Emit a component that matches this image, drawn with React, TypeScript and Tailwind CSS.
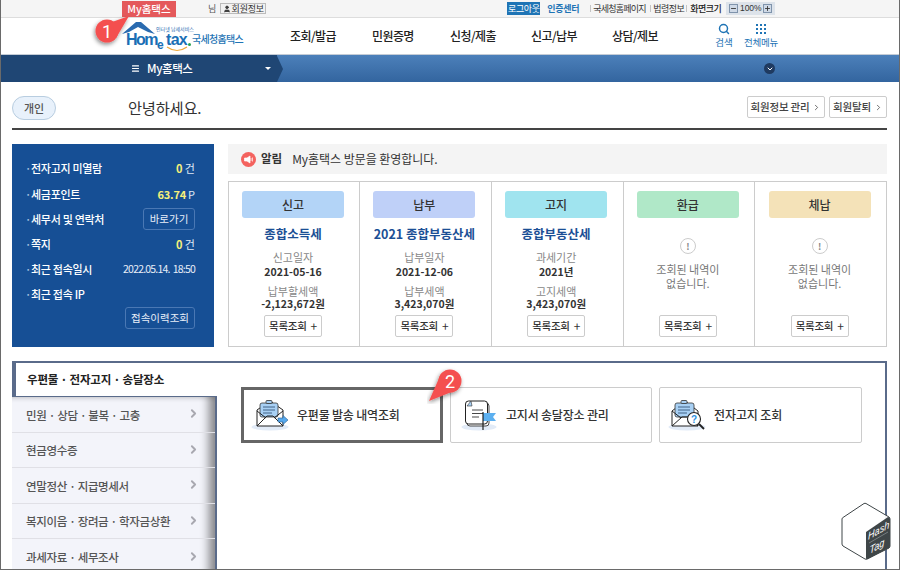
import { ChevronDown, ChevronRight, Menu, Plus, Minus, Search, User } from 'lucide-react';

const FONT = "font-['Noto_Sans_CJK_KR','Noto_Sans',sans-serif]";

const navItems = [
  { label: '조회/발급', w: 'w-[82px]' },
  { label: '민원증명', w: 'w-[78px]' },
  { label: '신청/제출', w: 'w-[81px]' },
  { label: '신고/납부', w: 'w-[81px]' },
  { label: '상담/제보', w: 'w-[81px]' },
];

const sideMenu = [
  '민원 · 상담 · 불복 · 고충',
  '현금영수증',
  '연말정산 · 지급명세서',
  '복지이음 · 장려금 · 학자금상환',
  '과세자료 · 세무조사',
];

const cards = [
  { tag: '신고', chip: 'bg-[#b3d4f7]', title: '종합소득세', l1: '신고일자', v1: '2021-05-16', l2: '납부할세액', v2: '-2,123,672원' },
  { tag: '납부', chip: 'bg-[#bfd0f8]', title: '2021 종합부동산세', l1: '납부일자', v1: '2021-12-06', l2: '납부세액', v2: '3,423,070원' },
  { tag: '고지', chip: 'bg-[#a0e4ef]', title: '종합부동산세', l1: '과세기간', v1: '2021년', l2: '고지세액', v2: '3,423,070원' },
  { tag: '환급', chip: 'bg-[#b0e8c8]' },
  { tag: '체납', chip: 'bg-[#f4e2b8]' },
];

function Badge({ n, className, tail }: { n: number; className: string; tail: string }) {
  return (
    <svg className={`absolute z-20 ${className}`} width="46" height="46" viewBox="0 0 46 46">
      <defs>
        <filter id={`bs${n}`} x="-30%" y="-30%" width="160%" height="160%">
          <feDropShadow dx="-1" dy="2" stdDeviation="2" floodColor="#000" floodOpacity="0.45" />
        </filter>
      </defs>
      <g filter={`url(#bs${n})`}>
        <circle cx="23" cy="23" r="11.5" fill="#f4504f" />
        <polygon points={tail} fill="#f4504f" />
      </g>
      <text x="23" y="29.5" textAnchor="middle" fontSize="18" fill="#fff" fontFamily="Roboto, sans-serif">{n}</text>
    </svg>
  );
}

function Logo() {
  return (
    <div className="relative w-[122px] h-[36px] shrink-0">
      <svg className="absolute left-0 top-[3px]" width="34" height="14" viewBox="0 0 34 14">
        <polygon points="0,13 14,1 19,1 33,13 26,11 16,6 7,11" fill="#2a6bb0" />
      </svg>
      <span className="absolute left-[34px] top-[8px] text-[5px] leading-[6px] text-[#2a6bb0] whitespace-nowrap">인터넷 납세서비스</span>
      <span className="absolute left-[4px] top-[12px] text-[16px] leading-[20px] font-bold tracking-[-1.5px] text-[#1b6fb5] font-['Liberation_Sans',sans-serif]">Hom</span>
      <span className="absolute left-[35px] top-[18px] text-[12px] leading-[18px] font-bold text-[#1b6fb5] font-['Liberation_Sans',sans-serif]">e</span>
      <span className="absolute left-[44px] top-[12px] text-[16px] leading-[20px] font-bold tracking-[-0.7px] text-[#1b6fb5] font-['Liberation_Sans',sans-serif]">tax</span>
      <span className="absolute left-[66px] top-[25px] w-[3px] h-[3px] rounded-full bg-[#2aa050]" />
      <svg className="absolute left-[44px] top-[28px]" width="22" height="6" viewBox="0 0 22 6">
        <path d="M1 1 Q11 8 21 1" fill="none" stroke="#eea83a" strokeWidth="1.2" />
      </svg>
      <span className="absolute left-[70px] top-[14px] text-[10px] leading-[14px] font-medium tracking-[-0.7px] text-[#1f74b5] whitespace-nowrap">국세청홈택스</span>
    </div>
  );
}

function SummaryRow({ label, children }: { label: string; children?: React.ReactNode }) {
  return (
    <div className="flex items-center justify-between h-[25.2px]">
      <span className="flex items-center text-[11px] font-medium tracking-[-0.3px] text-white whitespace-nowrap">
        <span className="w-[6px] text-[#a8c0e0]">·</span>
        {label}
      </span>
      {children}
    </div>
  );
}

function OutlineBtn({ children, className }: { children: React.ReactNode; className: string }) {
  return (
    <button className={`flex items-center justify-center rounded-[3px] border border-[#4a78b4] text-[10.5px] text-[#e8eef8] ${className}`}>
      {children}
    </button>
  );
}

function MailSendIcon() {
  return (
    <svg width="38" height="32" viewBox="0 0 38 32" className="shrink-0">
      <ellipse cx="19" cy="28" rx="18.5" ry="3.5" fill="#e2ebf7" />
      <path d="M6 11 L19 2 L32 11 V27 H6 Z" fill="#fff" stroke="#222" strokeWidth="1" />
      <rect x="9" y="4" width="18" height="14" rx="2" fill="#a8d0f4" stroke="#333" strokeWidth="0.8" />
      <rect x="15" y="1.5" width="6" height="3" rx="1" fill="#a8d0f4" stroke="#333" strokeWidth="0.8" />
      <path d="M12 8 H24 M12 11 H24 M12 14 H21" stroke="#35587c" strokeWidth="0.9" />
      <path d="M6 27 L16 17 H22 L32 27 M6 12 L15 19 M32 12 L23 19" fill="none" stroke="#222" strokeWidth="1" />
      <path d="M27 19 H32 V16.5 L37 21 L32 25.5 V23 H27 Z" fill="#56a8ec" stroke="#2d5f8f" strokeWidth="0.6" />
    </svg>
  );
}

function NoticeIcon() {
  return (
    <svg width="36" height="32" viewBox="0 0 36 32" className="shrink-0">
      <ellipse cx="18" cy="28" rx="17.5" ry="3.5" fill="#e2ebf7" />
      <rect x="6" y="4" width="22" height="23" rx="3" fill="#fff" stroke="#333" strokeWidth="0.9" />
      <rect x="4.5" y="2" width="22" height="23" rx="3" fill="#fff" stroke="#222" strokeWidth="1" />
      <polygon points="6,7 10,2 11,7" fill="#a8d0f4" stroke="#333" strokeWidth="0.6" />
      <path d="M11 11 H22 M11 14.5 H22 M11 18 H18" stroke="#333" strokeWidth="0.9" />
      <polygon points="22,14 35,14 32,18 35,22 22,22" fill="#5cb0f0" />
      <path d="M22 13 V31" stroke="#111" strokeWidth="1.1" />
    </svg>
  );
}

function MailSearchIcon() {
  return (
    <svg width="38" height="32" viewBox="0 0 38 32" className="shrink-0">
      <ellipse cx="19" cy="28" rx="18.5" ry="3.5" fill="#e2ebf7" />
      <path d="M4 12 L17 2 L30 12 V27 H4 Z" fill="#fff" stroke="#222" strokeWidth="1" />
      <rect x="7" y="4" width="19" height="14" rx="2" fill="#a8d0f4" stroke="#333" strokeWidth="0.8" />
      <rect x="13" y="1.5" width="6" height="3" rx="1" fill="#a8d0f4" stroke="#333" strokeWidth="0.8" />
      <path d="M10 8 H22 M10 11 H22 M10 14 H19" stroke="#35587c" strokeWidth="0.9" />
      <path d="M4 27 L14 18 H20 L30 27 M4 12 L13 19" fill="none" stroke="#222" strokeWidth="1" />
      <circle cx="26" cy="20" r="6.5" fill="#fff" stroke="#222" strokeWidth="1.1" />
      <text x="26" y="23.5" textAnchor="middle" fontSize="10" fontWeight="700" fill="#2d8fe0" fontFamily="Liberation Sans, sans-serif">?</text>
      <path d="M31 25 L36 30" stroke="#222" strokeWidth="1.8" />
    </svg>
  );
}

function HashTagMark() {
  return (
    <svg className="absolute left-[840px] top-[502px] z-20" width="52" height="59" viewBox="0 0 52 59">
      <path d="M23 1.5 Q24 1 25 1.5 L48 15 Q49 16 49 17 V44 Q49 45 48 46 L26 57 Q25 57.5 24 57 L2 44 Q1 43 1 42 V17 Q1 16 2 15.5 Z" fill="#fff" fillOpacity="0.92" stroke="#3f4648" strokeWidth="1" />
      <path d="M25 30 L47 15 Q49 15 49 17 V44 Q49 45 48 46 L27 57 Q25 58 25 56 Z" fill="#3f4648" />
      <g fill="#fff" fontFamily="Liberation Sans, sans-serif" fontStyle="italic" fontSize="10.5">
        <text transform="matrix(0.87 -0.5 0 1 27 38)">Hash</text>
        <text transform="matrix(0.87 -0.5 0 1 28.5 52)">Tag</text>
      </g>
      <path d="M28 41 L47 30" stroke="#aeb4b6" strokeWidth="0.5" />
    </svg>
  );
}

function ListBtn() {
  return (
    <button className="flex items-center justify-center gap-[4px] w-[58px] h-[22px] bg-white border border-[#ccc] rounded-[2px] text-[10.5px] font-medium tracking-[-0.3px] text-[#333] whitespace-nowrap">
      목록조회 <span className="text-[12px] font-normal leading-none">+</span>
    </button>
  );
}

function Sep() {
  return <span className="w-[1px] h-[7px] bg-[#c4c4c4] shrink-0" />;
}

export default function App() {
  return (
    <div className={`relative w-[900px] h-[570px] overflow-hidden bg-white border-x border-b border-[#6a6a6a] ${FONT}`}>
      {/* top utility bar */}
      <div className="flex items-center h-[18px] bg-[#f5f5f5] border-b border-[#dddddd] pl-[121px] text-[9px] text-[#444] whitespace-nowrap">
        <div className="flex items-center justify-center w-[54px] h-[16px] mt-[1px] self-start bg-[#e4595b] text-[10.5px] font-medium text-white">My홈택스</div>
        <span className="ml-[32px] text-[#555]">님</span>
        <span className="flex items-center gap-[1px] ml-[4px] w-[46px] h-[11px] justify-center border border-[#bbb] bg-[#f2f2f2] text-[#333] tracking-[-0.2px]">
          <User size={8} fill="#444" strokeWidth={2} />회원정보
        </span>
        <span className="flex items-center justify-center ml-[241px] w-[33px] h-[13px] bg-[#1f74b5] text-white tracking-[-0.4px]">로그아웃</span>
        <span className="ml-[7px] w-[43px] font-bold tracking-[-0.3px] text-[#1f74b5]">인증센터</span>
        <Sep />
        <span className="ml-[2px] w-[57px] tracking-[-0.8px] text-[#333]">국세청홈페이지</span>
        <Sep />
        <span className="ml-[2px] w-[33px] tracking-[-0.5px] text-[#333]">법령정보</span>
        <Sep />
        <span className="ml-[3px] w-[36px] font-medium tracking-[-0.5px] text-[#222]">화면크기</span>
        <span className="flex items-center justify-between w-[49px] h-[13px] px-[3px] bg-[#dde3ea] text-[8.5px] font-['Liberation_Sans',sans-serif] text-[#333]">
          <span className="flex items-center justify-center w-[9px] h-[9px] bg-[#cfd9e6] border border-[#7f93ab]"><Minus size={7} strokeWidth={3} /></span>
          100%
          <span className="flex items-center justify-center w-[9px] h-[9px] bg-[#cfd9e6] border border-[#7f93ab]"><Plus size={7} strokeWidth={3} /></span>
        </span>
      </div>

      {/* header */}
      <div className="flex items-center h-[37px] bg-white border-b border-[#c4ccd6] pl-[121px]">
        <Logo />
        <nav className="flex ml-[46px]">
          {navItems.map((item) => (
            <a key={item.label} className={`${item.w} text-[12px] font-medium tracking-[-0.6px] text-[#222] whitespace-nowrap`}>{item.label}</a>
          ))}
        </nav>
        <div className="flex flex-col items-center ml-[22px] w-[18px] text-[#1f74b5]">
          <Search size={12} strokeWidth={3} />
          <span className="text-[9.5px] leading-[14px] whitespace-nowrap">검색</span>
        </div>
        <div className="flex flex-col items-center ml-[11px] w-[34px] text-[#1f74b5]">
          <div className="grid grid-cols-3 gap-[2px] w-[10px] h-[12px] content-center">
            {Array.from({ length: 9 }).map((_, i) => (
              <span key={i} className="w-[2px] h-[2px] bg-[#1f74b5]" />
            ))}
          </div>
          <span className="text-[9.5px] leading-[14px] tracking-[-0.3px] whitespace-nowrap">전체메뉴</span>
        </div>
      </div>

      {/* blue menu bar */}
      <div className="relative flex items-center h-[27px] bg-gradient-to-b from-[#4c80ba] to-[#33659f]">
        <div className="flex items-center h-full w-[276px] bg-[#1f4674] pl-[130px] text-white">
          <Menu size={9} strokeWidth={3} />
          <span className="ml-[7px] text-[11.5px] font-medium tracking-[-0.4px]">My홈택스</span>
          <span className="ml-[72px] w-0 h-0 border-x-[3px] border-x-transparent border-t-[3px] border-t-white" />
        </div>
        <div className="w-0 h-0 border-y-[13.5px] border-y-transparent border-l-[6px] border-l-[#1f4674]" />
        <span className="ml-[481px] flex items-center justify-center w-[11px] h-[11px] rounded-full bg-[#1f3a60] text-white">
          <ChevronDown size={8} strokeWidth={3} />
        </span>
      </div>

      <div className="pl-[11px] pr-[12px]">
        {/* greeting */}
        <div className="flex items-start h-[48px] border-b-2 border-[#444] pt-[14px]">
          <span className="flex items-center justify-center w-[44px] h-[24px] rounded-full bg-[#e8f1fb] border border-[#b8cde0] text-[11px] font-medium text-[#555]">개인</span>
          <span className="ml-[72px] text-[15.3px] leading-[22px] tracking-[-0.2px] text-[#333]">안녕하세요.</span>
          <button className="ml-auto flex items-center justify-center gap-[3px] w-[78px] h-[22px] border border-[#ccc] rounded-[2px] text-[10.5px] font-medium tracking-[-0.2px] text-[#444] whitespace-nowrap">
            회원정보 관리 <ChevronRight size={9} />
          </button>
          <button className="ml-[4px] flex items-center justify-center gap-[3px] w-[58px] h-[22px] border border-[#ccc] rounded-[2px] text-[10.5px] font-medium tracking-[-0.2px] text-[#444] whitespace-nowrap">
            회원탈퇴 <ChevronRight size={9} />
          </button>
        </div>

        {/* summary + status cards */}
        <div className="flex mt-[14px] gap-[14px] h-[203px]">
          <div className="w-[202px] shrink-0 bg-[#164f95] pt-[12px] pl-[13px] pr-[19px] flex flex-col">
            <SummaryRow label="전자고지 미열람">
              <span className="text-[11px] text-[#dfe8f5]"><b className="font-bold text-[#f5f07a]">0</b> 건</span>
            </SummaryRow>
            <SummaryRow label="세금포인트">
              <span className="text-[11px] text-[#dfe8f5]"><b className="font-bold tracking-[-0.2px] text-[#f5f07a]">63.74</b><span className="ml-[2px]">P</span></span>
            </SummaryRow>
            <SummaryRow label="세무서 및 연락처">
              <OutlineBtn className="w-[52px] h-[22px]">바로가기</OutlineBtn>
            </SummaryRow>
            <SummaryRow label="쪽지">
              <span className="text-[11px] text-[#dfe8f5]"><b className="font-bold text-[#f5f07a]">0</b> 건</span>
            </SummaryRow>
            <SummaryRow label="최근 접속일시">
              <span className="text-[10.5px] tracking-[-0.8px] text-[#e8eef8] whitespace-pre">2022.05.14.  18:50</span>
            </SummaryRow>
            <SummaryRow label="최근 접속 IP" />
            <div className="flex justify-end">
              <OutlineBtn className="w-[70px] h-[22px]">접속이력조회</OutlineBtn>
            </div>
          </div>

          <div className="flex-1 flex flex-col">
            <div className="flex items-center h-[30px] bg-[#f4f4f4] pl-[13px] text-[11.5px] text-[#333]">
              <svg width="15" height="15" viewBox="0 0 15 15" className="shrink-0">
                <circle cx="7.5" cy="7.5" r="7.5" fill="#f4635f" />
                <path d="M3.5 6 H6 L9 4 V11 L6 9 H3.5 Z M10 6 V9 M11.5 5.5 V9.5" fill="#fff" stroke="#fff" strokeWidth="0.7" />
              </svg>
              <b className="ml-[5px] font-bold">알림</b>
              <span className="ml-[10px] text-[12px] tracking-[-0.05px]">My홈택스 방문을 환영합니다.</span>
            </div>
            <div className="grid grid-cols-[130px_repeat(4,1fr)] mt-[7px] h-[166px] border border-[#cccccc]">
              {cards.map((c, i) => (
                <div key={c.tag} className={`flex flex-col items-center pt-[9px] pb-[9px] pr-[2px] ${i > 0 ? 'border-l border-[#cccccc]' : ''}`}>
                  <div className={`flex items-center justify-center w-[102px] h-[27px] shrink-0 rounded-[3px] text-[12px] font-medium text-[#333] ${c.chip}`}>{c.tag}</div>
                  {c.title ? (
                    <div className="flex flex-col items-center mt-[7px] whitespace-nowrap">
                      <span className="text-[12.5px] leading-[18px] font-bold text-[#1b4f95]">{c.title}</span>
                      <span className="mt-[7px] text-[11px] leading-[15px] text-[#888]">{c.l1}</span>
                      <span className="text-[10.5px] leading-[13px] font-bold text-[#333]">{c.v1}</span>
                      <span className="mt-[5.5px] text-[11px] leading-[14px] text-[#888]">{c.l2}</span>
                      <span className="text-[10.5px] leading-[12px] font-bold text-[#333]">{c.v2}</span>
                    </div>
                  ) : (
                    <div className="flex flex-col items-center mt-[20px] whitespace-nowrap">
                      <span className="flex items-center justify-center w-[16px] h-[16px] rounded-full border border-[#ccc] text-[9px] leading-none font-bold text-[#888]">!</span>
                      <p className="mt-[8px] text-center text-[11px] leading-[14px] text-[#777]">조회된 내역이<br />없습니다.</p>
                    </div>
                  )}
                  <div className="mt-auto"><ListBtn /></div>
                </div>
              ))}
            </div>
          </div>
        </div>

        {/* service section */}
        <div className="flex mt-[14px] h-[209px] border-t-2 border-r-2 border-[#5a6b8a]">
          <div className="w-[205px] shrink-0 flex flex-col">
            <div className="flex items-center h-[33px] shrink-0 pl-[11px] border-l-4 border-[#5a6b8a] text-[11.5px] font-bold tracking-[-0.2px] text-[#222] whitespace-nowrap">
              우편물 · 전자고지 · 송달장소
            </div>
            <div className="flex-1 border-t border-r-2 border-[#5a6b8a] bg-[#f3f4fa] shadow-[inset_-14px_0_10px_-8px_rgba(0,0,0,0.45),inset_0_6px_5px_-5px_rgba(0,0,0,0.2)]">
              {sideMenu.map((m) => (
                <div key={m} className="flex items-center justify-between h-[35.6px] pt-[2px] pl-[14px] pr-[15px] border-b border-[#e0e0e6] text-[11.5px] font-medium tracking-[-0.35px] text-[#555] whitespace-nowrap">
                  {m}
                  <ChevronRight size={13} strokeWidth={3.5} className="-mt-[3px] text-[#a8a8b0]" />
                </div>
              ))}
            </div>
          </div>
          <div className="flex items-start gap-[7px] pt-[24px] pl-[24px]">
            <button className="flex items-center gap-[8px] w-[202px] h-[56px] pl-[7px] border-[3px] border-[#666] text-[12px] font-medium tracking-[-0.2px] text-[#333] whitespace-nowrap">
              <MailSendIcon />우편물 발송 내역조회
            </button>
            <button className="flex items-center gap-[9px] w-[202px] h-[56px] pl-[10px] border border-[#ccc] rounded-[2px] text-[12px] font-medium tracking-[-0.2px] text-[#333] whitespace-nowrap">
              <NoticeIcon />고지서 송달장소 관리
            </button>
            <button className="flex items-center gap-[8px] w-[203px] h-[56px] pl-[8px] border border-[#ccc] rounded-[2px] text-[12px] font-medium tracking-[-0.1px] text-[#333] whitespace-nowrap">
              <MailSearchIcon />전자고지 조회
            </button>
          </div>
        </div>
      </div>

      <Badge n={1} className="left-[83px] top-[8px]" tail="28,14 45,8 32,30" />
      <Badge n={2} className="left-[426px] top-[358px]" tail="13,18 2,43 27,33" />
      <HashTagMark />
    </div>
  );
}
